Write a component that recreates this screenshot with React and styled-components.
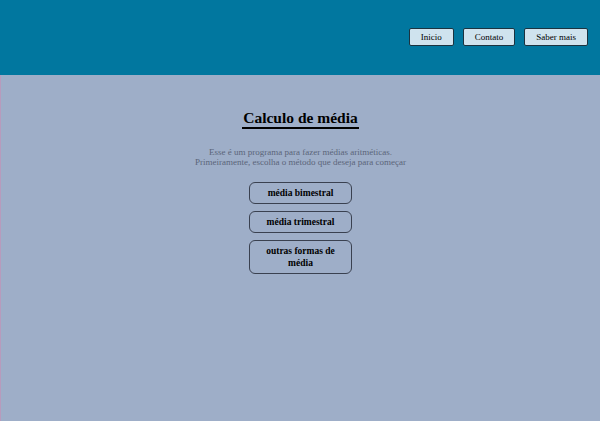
import React from "react";
import styled, { createGlobalStyle } from "styled-components";

const Global = createGlobalStyle`
  html, body { margin: 0; padding: 0; height: 100%; }
  body {
    background: #9eaec8;
    font-family: "Liberation Serif", "Times New Roman", serif;
  }
  #root { min-height: 100%; }
`;

const Page = styled.div`
  min-height: 421px;
  display: flex;
  flex-direction: column;
`;

const Header = styled.header`
  height: 75px;
  flex: none;
  background: #01779f;
  display: flex;
  justify-content: flex-end;
  align-items: flex-start;
  gap: 9px;
  padding: 28px 12px 0 0;
  box-sizing: border-box;
`;

const NavButton = styled.button`
  font-family: "Liberation Serif", "Times New Roman", serif;
  font-size: 9px;
  color: #000;
  background: #cfe3ee;
  border: 1px solid #1b3340;
  border-radius: 2px;
  height: 18px;
  padding: 0 11px;
  cursor: pointer;
`;

const Main = styled.main`
  flex: 1;
  display: flex;
  flex-direction: column;
  align-items: center;
  padding-top: 34px;
  border-left: 1px solid #b79bbd;
`;

const Title = styled.h1`
  margin: 0;
  font-size: 15.5px;
  font-weight: bold;
  color: #000;
  border-bottom: 2px solid #000;
  line-height: 17px;
  padding: 0 1px 1px;
`;

const Intro = styled.p`
  margin: 18px 0 0;
  text-align: center;
  font-size: 9px;
  line-height: 10px;
  color: #5b6579;
`;

const Options = styled.div`
  display: flex;
  flex-direction: column;
  gap: 7px;
  margin-top: 15px;
`;

const Option = styled.button`
  width: 103px;
  padding: 4px 14px;
  font-family: "Liberation Serif", "Times New Roman", serif;
  font-size: 9.5px;
  font-weight: bold;
  line-height: 12px;
  color: #000;
  background: transparent;
  border: 1px solid #3a4150;
  border-radius: 6px;
  cursor: pointer;
`;

export default function App() {
  return (
    <>
      <Global />
      <Page>
        <Header>
          <NavButton>Inicio</NavButton>
          <NavButton>Contato</NavButton>
          <NavButton>Saber mais</NavButton>
        </Header>
        <Main>
          <Title>Calculo de média</Title>
          <Intro>
            Esse é um programa para fazer médias aritméticas.
            <br />
            Primeiramente, escolha o método que deseja para começar
          </Intro>
          <Options>
            <Option>média bimestral</Option>
            <Option>média trimestral</Option>
            <Option>outras formas de média</Option>
          </Options>
        </Main>
      </Page>
    </>
  );
}
